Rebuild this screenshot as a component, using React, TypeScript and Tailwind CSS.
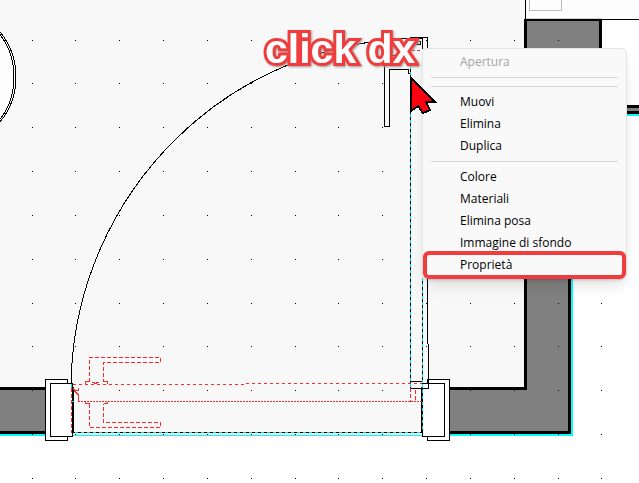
const gridX = [32, 75, 119, 163, 207, 251, 295, 338, 382, 426, 470, 514, 558, 601];
const gridY = [40, 83, 127, 171, 215, 259, 303, 346, 390, 434, 478];

function FloorPlan() {
  return (
    <svg className="absolute inset-0 size-full" shapeRendering="crispEdges" aria-hidden="true">
      {/* room floor */}
      <path d="M0 0H526V388H422V435H0Z" fill="#f8f8f8" />
      <ellipse cx="-55" cy="77" rx="71" ry="71" fill="#fdfdfd" stroke="#000" />
      <ellipse cx="-55" cy="77" rx="69" ry="70" fill="#fdfdfd" stroke="#000" />

      {/* neighbouring room */}
      <path d="M525.5 0V19.5H639" fill="none" stroke="#000" />
      <path d="M526 0H639V19H526Z" fill="#fdfdfd" />
      <path d="M529.5 0V10.5H561.5V0" fill="none" stroke="#bdbdbd" />

      {/* walls */}
      <path d="M524 19H602V120H524Z" fill="#000" />
      <path d="M526 18H602V19H526Z" fill="#d0d0d0" />
      <path d="M527 21H599V120H527Z" fill="#808080" />
      <path d="M600 105H639V114H600Z" fill="#000" />
      <path d="M600 108H639V111H600Z" fill="#808080" />
      <path d="M600 114H639V116H600Z" fill="#0ff" />
      <path d="M524 120H573V436H435V387H524Z" fill="#0ff" />
      <path d="M524 120H571V434H435V387H524Z" fill="#000" />
      <path d="M527 120H568V431H435V390H527Z" fill="#808080" />
      <path d="M0 387H60V434H0Z" fill="#000" />
      <path d="M0 390H60V431H0Z" fill="#808080" />
      <path d="M0 434H60V436H0Z" fill="#0ff" />

      {/* threshold */}
      <path d="M73 435.5H422" stroke="#0ff" />
      <path d="M73 432.5H422" stroke="#000" />
      <path d="M75 432.5H422" stroke="#00e0e0" strokeDasharray="3 3" />

      {/* snap grid */}
      {gridY.map((y) => gridX.map((x) => <rect key={`${x}-${y}`} x={x} y={y} width="1" height="1" fill="#000" />))}

      {/* jambs */}
      <g fill="#fff" stroke="#000">
        <path d="M45.5 379.5H67.5V440.5H45.5Z" />
        <path d="M50.5 383.5H72.5V436.5H50.5Z" />
        <path d="M427.5 379.5H449.5V440.5H427.5Z" />
        <path d="M422.5 383.5H444.5V436.5H422.5Z" />
      </g>
      <path d="M73 387V432M422 387V432" stroke="#000" strokeWidth="2" />
      <path d="M71.5 388V433" stroke="#f82a2a" strokeDasharray="4 2" />
      <path d="M71.5 384V388M72 401.5H74" stroke="#00e0e0" />
      <path d="M422.5 384V432" stroke="#00e0e0" strokeDasharray="3 3" />

      {/* swing of the door leaf */}
      <path d="M71.5 384V370A351 351 0 0 1 410 38.5" fill="none" stroke="#000" />

      {/* open leaf and its handle */}
      <g fill="none" stroke="#000">
        <path d="M403 38.5H410V37.5H427.5V344M428.5 344V388.5H410" />
        <path d="M410 38.5H422.5V49M417 41.5H421M420.5 41V45M415 44.5H421M417.5 42V44M427.5 379V384" />
        <path d="M410 381.5H422M410.5 38V388M422.5 278V384" />
        <path d="M410 55.5H384.5V126.5H389.5V69.5H408.5V73.5H410" />
      </g>
      <path d="M410.5 54V388M422.5 278V388" stroke="#00e0e0" strokeDasharray="3 3" />

      {/* closed leaf */}
      <g fill="none" stroke="#f82a2a">
        <path d="M73 384.5H246M246 383.5H422" strokeDasharray="3 3" />
        <path d="M78 401.5H422" strokeDasharray="2 1" />
        <path d="M412 50.5H422" strokeDasharray="3 2" />
        <path d="M89.5 382V357.5H160.5V362.5H103.5V382" strokeDasharray="4 2" />
        <path d="M89.5 404V427.5H160.5V422.5H103.5V404" strokeDasharray="4 2" />
        <path d="M85 383.5V381.5H89M92 382.5H94V383.5H96V382.5H99M103 381.5H107.5V384" />
        <path d="M85.5 402V403.5H89.5M103.5 403.5H107.5V402" />
        <path d="M410.5 388V402M415.5 390V402" strokeDasharray="4 2" />
        <path d="M78.5 388V390L75 391.5L78.5 395V401M73 388L76 392" />
      </g>
    </svg>
  );
}

function MenuItem({ label, disabled = false }: { label: string; disabled?: boolean }) {
  return (
    <button
      type="button"
      role="menuitem"
      disabled={disabled}
      className="h-[22px] pl-[37px] pr-6 text-left text-xs whitespace-nowrap text-black disabled:text-[#a5a5a5]"
    >
      {label}
    </button>
  );
}

function Separator() {
  return <div role="separator" className="mx-2 my-1 h-px shrink-0 bg-[#d5d5d5]" />;
}

function ContextMenu() {
  return (
    <div
      role="menu"
      className="absolute top-12 left-[422px] flex w-[205px] flex-col rounded-md border border-[#e4e4e4] bg-[#f9f9f9] py-0.5 font-['Open_Sans','Noto_Sans',sans-serif] shadow-lg"
    >
      <MenuItem label="Apertura" disabled />
      <Separator />
      <Separator />
      <MenuItem label="Muovi" />
      <MenuItem label="Elimina" />
      <MenuItem label="Duplica" />
      <Separator />
      <MenuItem label="Colore" />
      <MenuItem label="Materiali" />
      <MenuItem label="Elimina posa" />
      <MenuItem label="Immagine di sfondo" />
      <MenuItem label="Proprietà" />
      <div className="pointer-events-none absolute right-0 -bottom-px left-0 h-7 rounded-md border-4 border-[#f03c3c] shadow-sm" />
    </div>
  );
}

export default function App() {
  return (
    <main className="relative min-h-screen overflow-hidden bg-white">
      <FloorPlan />
      <ContextMenu />
      <p className="absolute top-7 left-[265px] font-['Liberation_Sans',Arial,sans-serif] text-[41px] leading-[42px] font-bold whitespace-nowrap text-white [-webkit-text-stroke:6px_#f03c3c] [paint-order:stroke_fill] [filter:drop-shadow(1px_1px_1px_#999999)]">
        click dx
      </p>
      <svg className="absolute top-[74px] left-[408px] h-11 w-8" viewBox="408 74 32 44" aria-hidden="true">
        <path
          d="M411 78V111L418 106L423 113L430 110L426 102H435Z"
          fill="#ff0010"
          stroke="#000"
          strokeWidth="2"
          shapeRendering="crispEdges"
        />
      </svg>
    </main>
  );
}
